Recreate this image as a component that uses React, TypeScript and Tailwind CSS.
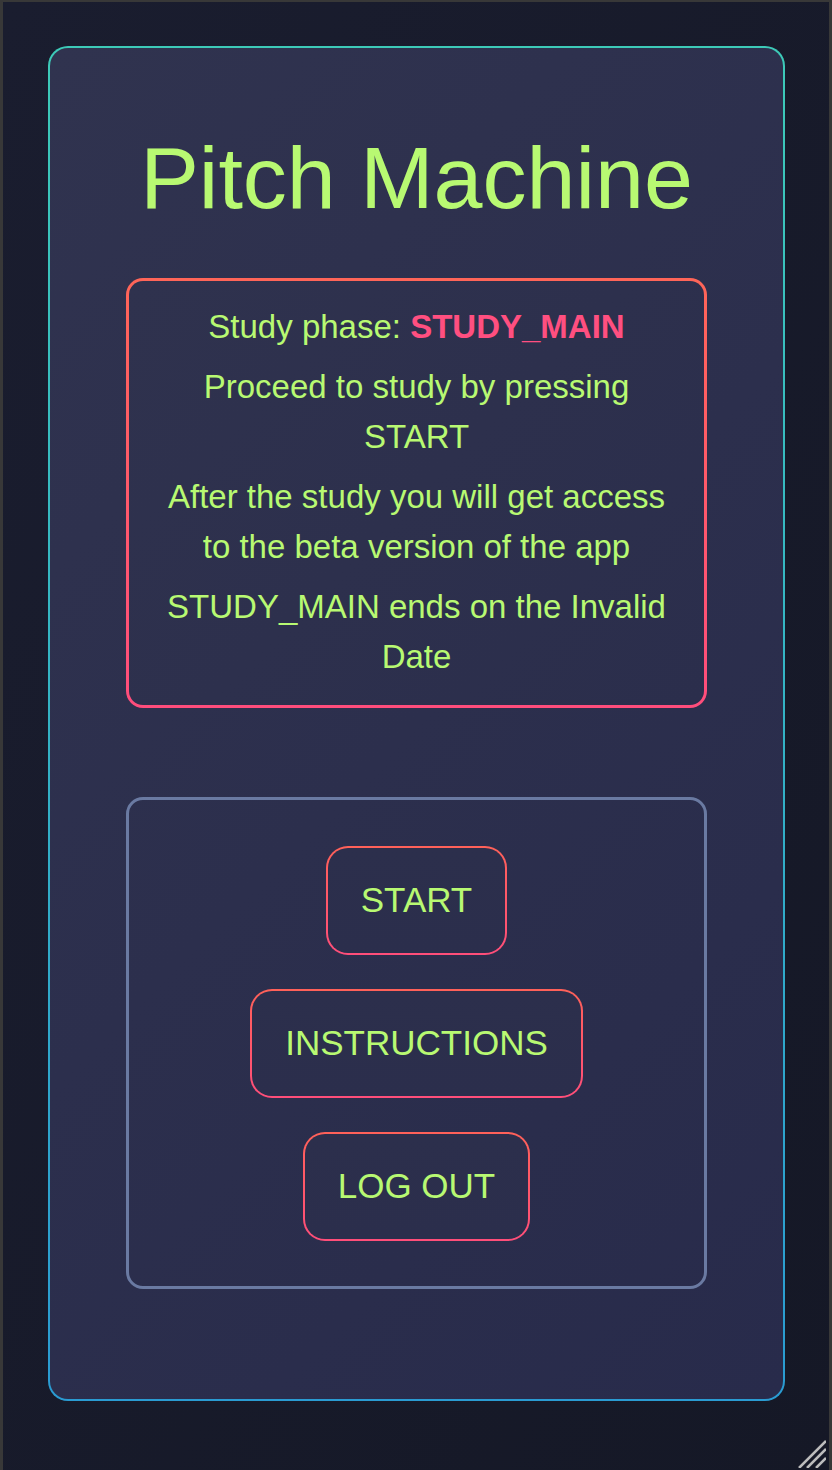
import React from "react";

const green = "text-[#b8f972]";

function MenuButton({ label }: { label: string }) {
  return (
    <button className="flex h-[109px] items-center justify-center rounded-[22px] border-2 border-transparent px-[33px] pb-[3px] text-[35px] leading-none text-[#b8f972] [background:linear-gradient(#2c2f4c,#2b2e4c)_padding-box,linear-gradient(to_bottom,#ff6159,#ff4e7a)_border-box]">
      {label}
    </button>
  );
}

export default function App() {
  return (
    <div className="relative h-[1470px] w-[832px] overflow-hidden border-x-[3px] border-t-2 border-[#383838] bg-gradient-to-br from-[#1a1d2f] to-[#151826] font-['Liberation_Sans',Arial,sans-serif]">
      <div className="ml-[45px] mt-[44px] flex w-[737px] flex-col items-center rounded-[20px] border-2 border-transparent pt-[81px] pb-[110px] [background:linear-gradient(135deg,#30334f,#282b4b)_padding-box,linear-gradient(to_bottom,#3dcab8,#2a9bd2)_border-box]">
        <h1 className={`text-[88px] leading-[98px] ${green}`}>Pitch Machine</h1>

        <div
          className={`mt-[51px] flex w-[581px] flex-col gap-[10px] rounded-[17px] border-[3px] border-transparent px-[30px] pt-[21px] pb-[23px] text-center text-[33px] leading-[50px] ${green} [background:linear-gradient(135deg,#2f324e,#2b2e4c)_padding-box,linear-gradient(to_bottom,#ff6558,#ff4d7c)_border-box]`}
        >
          <p>
            Study phase: <span className="font-bold text-[#ff4f80]">STUDY_MAIN</span>
          </p>
          <p>Proceed to study by pressing START</p>
          <p>After the study you will get access to the beta version of the app</p>
          <p>STUDY_MAIN ends on the Invalid Date</p>
        </div>

        <div className="mt-[89px] flex w-[581px] flex-col items-center gap-[34px] rounded-[17px] border-[3px] border-[#6a7aa2] pt-[46px] pb-[45px]">
          <MenuButton label="START" />
          <MenuButton label="INSTRUCTIONS" />
          <MenuButton label="LOG OUT" />
        </div>
      </div>

      {/* resize grip */}
      <svg
        className="absolute bottom-[2px] right-[3px]"
        width="28"
        height="28"
        viewBox="0 0 28 28"
      >
        <g stroke="#bdbdbd" strokeWidth="2.5">
          <line x1="1" y1="28" x2="28" y2="1" />
          <line x1="9" y1="28" x2="28" y2="9" />
          <line x1="18" y1="28" x2="28" y2="18" />
        </g>
      </svg>
    </div>
  );
}
